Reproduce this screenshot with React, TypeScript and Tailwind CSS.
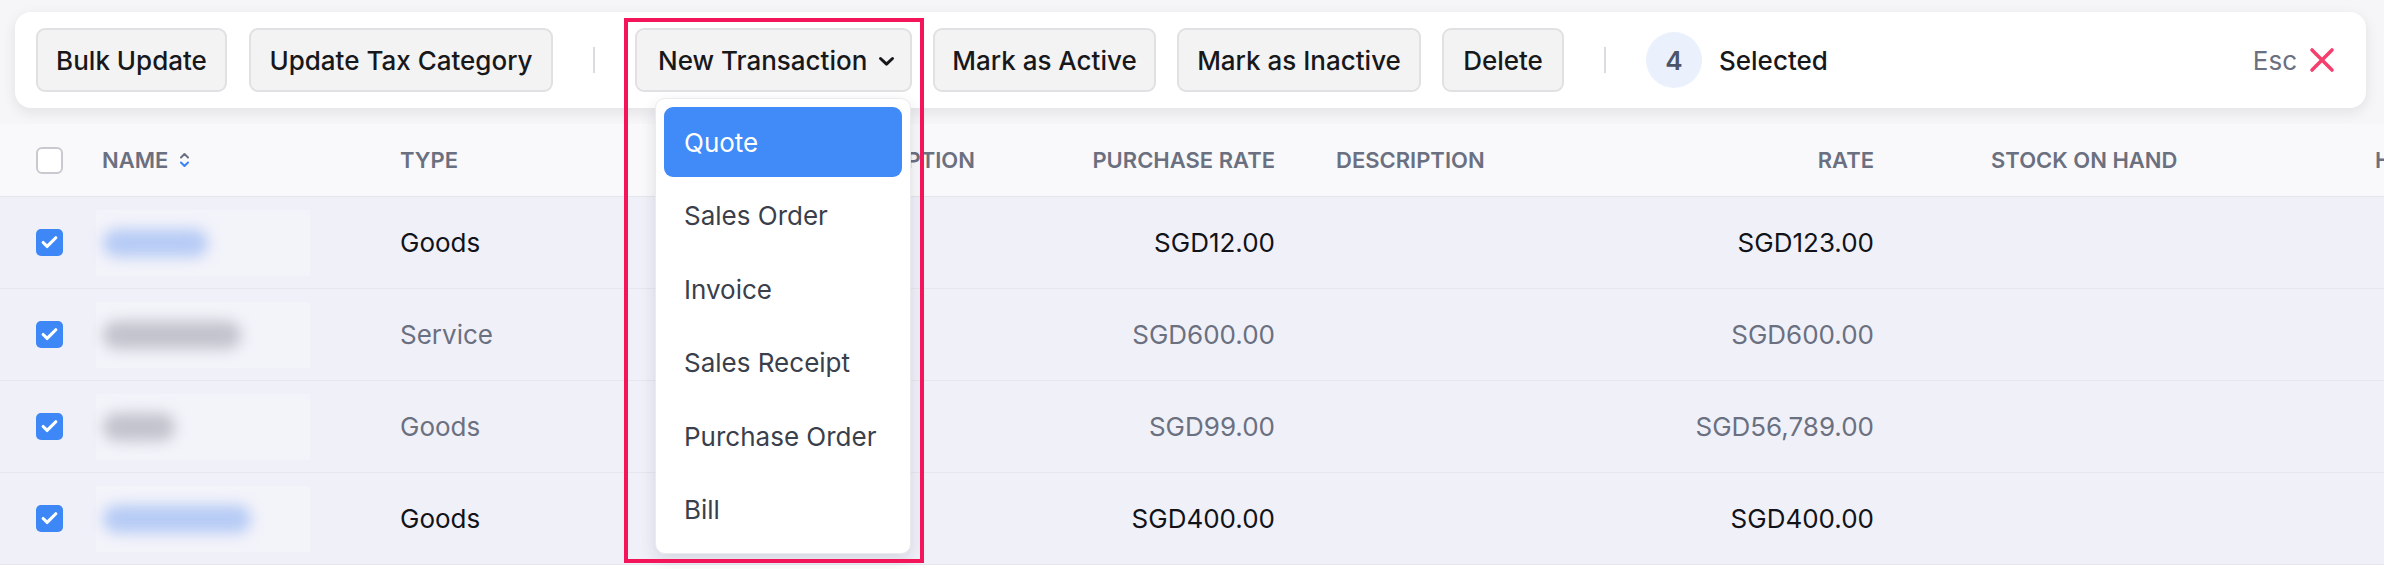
import { Check } from 'lucide-react';

type Row = {
  name: number;
  nameTone: 'blue' | 'gray';
  type: string;
  purchaseRate: string;
  rate: string;
  active: boolean;
};

const rows: Row[] = [
  { name: 105, nameTone: 'blue', type: 'Goods', purchaseRate: 'SGD12.00', rate: 'SGD123.00', active: true },
  { name: 138, nameTone: 'gray', type: 'Service', purchaseRate: 'SGD600.00', rate: 'SGD600.00', active: false },
  { name: 72, nameTone: 'gray', type: 'Goods', purchaseRate: 'SGD99.00', rate: 'SGD56,789.00', active: false },
  { name: 148, nameTone: 'blue', type: 'Goods', purchaseRate: 'SGD400.00', rate: 'SGD400.00', active: true },
];

const menuItems = ['Quote', 'Sales Order', 'Invoice', 'Sales Receipt', 'Purchase Order', 'Bill'];

const ActionButton = ({ label, width }: { label: string; width: string }) => (
  <button
    className={`${width} h-[64px] shrink-0 flex items-center justify-center rounded-[9px] border-2 border-[#e1e1e4] bg-[#f3f3f4] text-[26px] font-medium text-[#18181b]`}
  >
    {label}
  </button>
);

const Divider = () => <div className="w-[2px] h-[26px] bg-[#dcdce0] mx-[40px] shrink-0" />;

const SortIcon = () => (
  <svg width="11" height="16" viewBox="0 0 11 16" fill="none" className="ml-[11px]">
    <path d="M2 5.5 5.5 2 9 5.5" stroke="#6b7080" strokeWidth="2" strokeLinecap="round" strokeLinejoin="round" />
    <path d="M2 10.5 5.5 14 9 10.5" stroke="#3b82f6" strokeWidth="2" strokeLinecap="round" strokeLinejoin="round" />
  </svg>
);

const NewTransaction = () => (
  <div className="relative shrink-0">
    <button className="w-[277px] h-[64px] flex items-center pl-[21px] rounded-[9px] border-2 border-[#e1e1e4] bg-[#f3f3f4] text-[26px] font-medium text-[#18181b]">
      New Transaction
      <svg width="17" height="11" viewBox="0 0 17 11" fill="none" className="ml-[11px] mt-[2px]">
        <path d="M2.5 2.5 8.5 8.2 14.5 2.5" stroke="#18181b" strokeWidth="3" strokeLinecap="round" strokeLinejoin="round" />
      </svg>
    </button>

    {/* dropdown */}
    <div className="absolute left-[20px] top-[70px] w-[256px] h-[456px] rounded-[10px] border border-[#ebebef] bg-white p-[8px] shadow-[0_6px_16px_rgba(30,30,60,0.12)] flex flex-col gap-[3.5px]">
      {menuItems.map((item, i) => (
        <div
          key={item}
          className={`h-[70px] shrink-0 flex items-center pl-[20px] rounded-[9px] text-[26px] ${
            i === 0 ? 'bg-[#408bf7] text-white' : 'text-[#3a3f4b]'
          }`}
        >
          {item}
        </div>
      ))}
    </div>

    {/* highlight frame */}
    <div className="absolute -left-[11px] -top-[10px] w-[300px] h-[545px] border-[4px] border-[#f4145a] pointer-events-none" />
  </div>
);

const Toolbar = () => (
  <div className="bg-[#f6f6f8] pt-[12px] pb-[16px] pl-[15px] pr-[18px] relative z-10">
    <div className="h-[96px] flex items-center rounded-[16px] bg-white pl-[21px] pr-[31px] shadow-[0_4px_14px_rgba(20,20,40,0.09)]">
      <ActionButton label="Bulk Update" width="w-[191px]" />
      <div className="w-[22px] shrink-0" />
      <ActionButton label="Update Tax Category" width="w-[304px]" />
      <Divider />
      <NewTransaction />
      <div className="flex items-center gap-[21px] ml-[21px]">
        <ActionButton label="Mark as Active" width="w-[223px]" />
        <ActionButton label="Mark as Inactive" width="w-[244px]" />
        <ActionButton label="Delete" width="w-[122px]" />
      </div>
      <Divider />
      <div className="w-[56px] h-[56px] rounded-full bg-[#eaf1fd] flex items-center justify-center text-[26px] font-semibold text-[#4b5468] shrink-0">
        4
      </div>
      <span className="ml-[17px] text-[26px] font-medium text-[#18181b]">Selected</span>
      <div className="ml-auto flex items-center gap-[12px]">
        <span className="text-[26px] text-[#6b7080]">Esc</span>
        <svg width="26" height="26" viewBox="0 0 26 26" fill="none">
          <path d="M3 3 23 23M23 3 3 23" stroke="#f43f6e" strokeWidth="3.6" strokeLinecap="round" />
        </svg>
      </div>
    </div>
  </div>
);

const HeaderRow = () => (
  <div className="h-[73px] flex items-center bg-[#f9f9fb] border-b border-[#e4e4ea] text-[22px] font-semibold text-[#6b7080] uppercase whitespace-nowrap">
    <div className="w-[102px] pl-[36px] shrink-0">
      <div className="w-[27px] h-[27px] rounded-[6px] border-2 border-[#c9cad0] bg-white" />
    </div>
    <div className="w-[298px] shrink-0 flex items-center">
      Name
      <SortIcon />
    </div>
    <div className="w-[275px] shrink-0">Type</div>
    <div className="w-[360px] pl-[25px] shrink-0">Purchase Description</div>
    <div className="w-[240px] shrink-0 text-right">Purchase Rate</div>
    <div className="w-[380px] pl-[61px] shrink-0">Description</div>
    <div className="w-[219px] shrink-0 text-right">Rate</div>
    <div className="w-[501px] pl-[117px] shrink-0">Stock on Hand</div>
    <div className="shrink-0">HSN/SAC</div>
  </div>
);

const BodyRow = ({ row }: { row: Row }) => (
  <div
    className={`h-[92px] flex items-center bg-[#f0f0f9] border-b border-[#e5e6ee] text-[26px] whitespace-nowrap ${
      row.active ? 'text-[#111318]' : 'text-[#6b7080]'
    }`}
  >
    <div className="w-[102px] pl-[36px] shrink-0">
      <div className="w-[27px] h-[27px] rounded-[5px] bg-[#3d88f6] flex items-center justify-center">
        <Check className="w-[19px] h-[19px] text-white" strokeWidth={4} />
      </div>
    </div>
    <div className="w-[298px] shrink-0 h-full flex items-center">
      <div className="h-[66px] w-[214px] -ml-[6px] pl-[7px] flex items-center bg-[#f3f3fa]">
        <div
          className={`h-[28px] rounded-full blur-[7px] ${row.nameTone === 'blue' ? 'bg-[#b6cbf5]' : 'bg-[#c2c3cc]'}`}
          style={{ width: row.name }}
        />
      </div>
    </div>
    <div className="w-[275px] shrink-0">{row.type}</div>
    <div className="w-[360px] shrink-0" />
    <div className="w-[240px] shrink-0 text-right">{row.purchaseRate}</div>
    <div className="w-[380px] shrink-0" />
    <div className="w-[219px] shrink-0 text-right">{row.rate}</div>
    <div className="w-[501px] shrink-0" />
  </div>
);

export default function App() {
  return (
    <div className="w-[2384px] h-[569px] overflow-hidden bg-white font-['Inter',sans-serif]">
      <Toolbar />
      <HeaderRow />
      {rows.map((row, i) => (
        <BodyRow key={i} row={row} />
      ))}
    </div>
  );
}
